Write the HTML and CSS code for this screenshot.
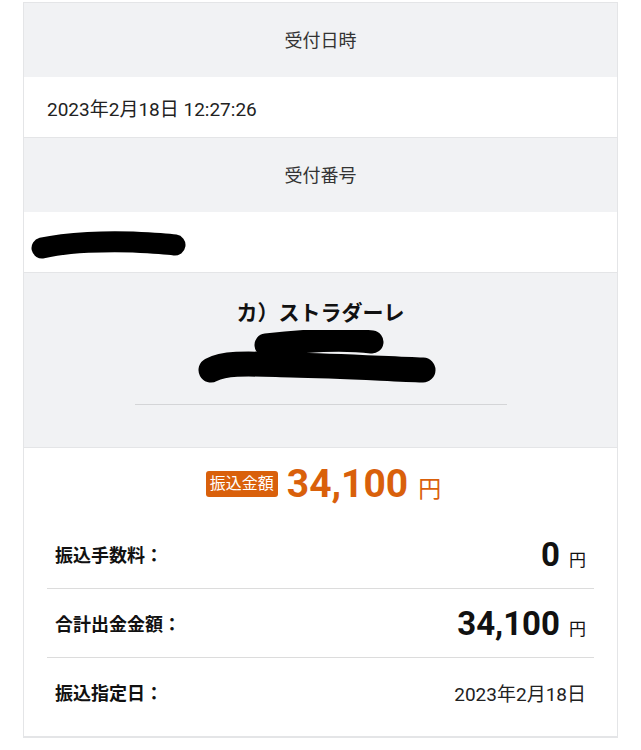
FILE: index.html
```html
<!DOCTYPE html>
<html lang="ja">
<head>
<meta charset="utf-8">
<link rel="stylesheet" href="styles.css">
</head>
<body>
<div class="card">
  <div class="head">受付日時</div>
  <div class="val">2023年2月18日 12:27:26</div>
  <div class="head">受付番号</div>
  <div class="val redact-row">
    <svg class="redact1" width="160" height="34" viewBox="0 0 160 34">
      <path d="M14 20 C 40 14, 80 13, 105 14 C 125 15, 140 16, 147 17" fill="none" stroke="#000" stroke-width="21" stroke-linecap="round"/>
    </svg>
  </div>
  <div class="payee">
    <div class="payee-name">カ）ストラダーレ</div>
    <svg class="redact2" width="260" height="54" viewBox="0 0 260 54">
      <path d="M75 15 C 110 11, 150 8, 181 12" fill="none" stroke="#000" stroke-width="23" stroke-linecap="round"/>
      <path d="M20 40 C 35 32, 60 34, 100 35 C 150 36, 200 39, 232 40" fill="none" stroke="#000" stroke-width="25" stroke-linecap="round"/>
    </svg>
    <div class="payee-line"></div>
  </div>
  <div class="summary">
    <div class="amount">
      <span class="badge">振込金額</span>
      <span class="amount-num">34,100</span>
      <span class="amount-yen">円</span>
    </div>
    <div class="row">
      <span class="label">振込手数料：</span>
      <span class="value"><span class="num">0</span><span class="yen">円</span></span>
    </div>
    <div class="row">
      <span class="label">合計出金金額：</span>
      <span class="value"><span class="num">34,100</span><span class="yen">円</span></span>
    </div>
    <div class="row last">
      <span class="label">振込指定日：</span>
      <span class="value date">2023年2月18日</span>
    </div>
  </div>
</div>
</body>
</html>
```

FILE: styles.css
```css
html, body {
  margin: 0;
  padding: 0;
  background: #fff;
}
body {
  font-family: Roboto, "Noto Sans CJK JP", sans-serif;
  color: #222;
  padding-top: 2px;
}
.card {
  margin: 0 23px;
  border: 1px solid #e4e5e7;
  border-bottom-width: 2px;
}
.head {
  background: #f1f2f4;
  height: 74px;
  padding-bottom: 3px;
  box-sizing: border-box;
  display: flex;
  align-items: center;
  justify-content: center;
  font-size: 18px;
  color: #333;
}
.val {
  height: 60px;
  display: flex;
  align-items: center;
  padding-left: 23px;
  font-size: 19px;
  color: #222;
  border-bottom: 1px solid #e4e5e7;
}
.redact-row {
  padding-left: 0;
}
.redact1 {
  display: block;
  margin-left: 4px;
  margin-top: 6px;
}
.payee {
  background: #f1f2f4;
  border-bottom: 1px solid #e4e5e7;
  padding: 28px 0 42px;
  display: flex;
  flex-direction: column;
  align-items: center;
}
.payee-name {
  font-size: 21px;
  font-weight: bold;
  line-height: 24px;
  color: #111;
}
.redact2 {
  display: block;
  margin-top: 5px;
}
.payee-line {
  width: 372px;
  height: 1px;
  background: #d4d5d7;
  margin-top: 20px;
}
.summary {
  padding: 0 23px 10px;
}
.amount {
  height: 72px;
  display: flex;
  align-items: center;
  justify-content: center;
  color: #d9600b;
  padding-left: 6px;
}
.badge {
  background: #d9600b;
  color: #fff;
  font-size: 16px;
  line-height: 26px;
  padding: 0 4px;
  border-radius: 3px;
  margin-right: 9px;
}
.amount-num {
  font-size: 39px;
  font-weight: bold;
  line-height: 40px;
}
.amount-yen {
  font-size: 23px;
  margin-left: 10px;
  margin-top: 6px;
}
.row {
  height: 68px;
  display: flex;
  align-items: center;
  justify-content: space-between;
  padding: 0 8px;
  border-bottom: 1px solid #dcdcdc;
}
.row.last {
  border-bottom: none;
}
.label {
  font-size: 18px;
  font-weight: bold;
  color: #111;
}
.value {
  display: flex;
  align-items: baseline;
  color: #111;
}
.num {
  font-size: 33px;
  font-weight: bold;
}
.yen {
  font-size: 17px;
  margin-left: 9px;
}
.date {
  font-size: 19px;
  color: #222;
}
```
